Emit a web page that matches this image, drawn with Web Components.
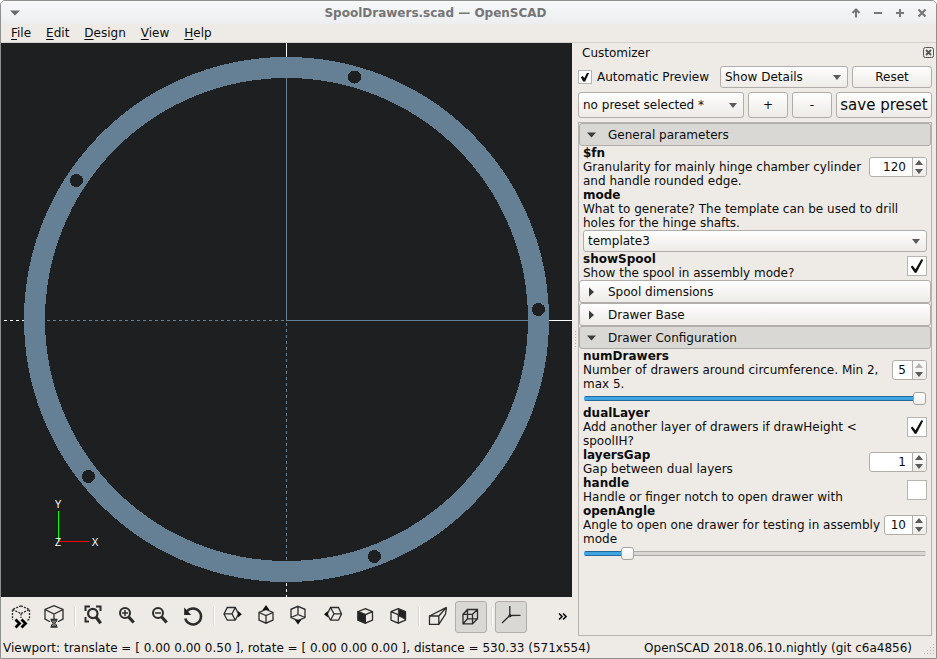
<!DOCTYPE html>
<html lang="en">
<head>
<meta charset="utf-8">
<title>SpoolDrawers.scad — OpenSCAD</title>
<style>
  body { margin: 0; background: #fff; color: #0c0c0c; font: 12px/14px "DejaVu Sans", sans-serif; }
</style>
</head>
<body>
<scad-window></scad-window>
<script>
const BASE = `
  *, *::before, *::after { box-sizing: border-box; }
  button, input, select { font: inherit; color: inherit; margin: 0; padding: 0; }
  button { background: none; border: 0; }
  svg { display: block; }
  .raised { border: 1px solid #b0adaa; border-radius: 3px; background: linear-gradient(#fefefe, #eeebe7); }
`;

function define(name, css, markup, setup) {
  customElements.define(name, class extends HTMLElement {
    connectedCallback() {
      if (this.shadowRoot) return;
      const root = this.attachShadow({ mode: 'open' });
      const t = document.createElement('template');
      t.innerHTML = `<style>${BASE}${css}</style>` + (typeof markup === 'function' ? markup(this) : markup);
      root.append(t.content.cloneNode(true));
      if (setup) setup(this, root);
    }
  });
}

/* ---------- title bar ---------- */
define('title-bar', `
  :host { display: flex; align-items: center; height: 23px; padding: 1px 3px 0;
    background: linear-gradient(#f7f8f8, #eceef0); color: #757575; }
  h1 { flex: 1; margin: 0; font-size: 12px; font-weight: bold; text-align: center; }
  button { width: 22px; height: 22px; display: grid; place-items: center; }
  nav { display: flex; }
`, `
  <button aria-label="Window menu"><svg width="10" height="6"><path d="M0 0.5h10l-5 5z" fill="#6a6a6a"/></svg></button>
  <h1><slot></slot></h1>
  <nav>
    <button aria-label="Shade"><svg width="10" height="10"><path d="M5 9.500V2M1.500 5L5 1.500L8.500 5" fill="none" stroke="#777" stroke-width="2"/></svg></button>
    <button aria-label="Minimize"><svg width="10" height="10"><path d="M1 5h8" stroke="#777" stroke-width="2"/></svg></button>
    <button aria-label="Maximize"><svg width="10" height="10"><path d="M1 5h8M5 1v8" stroke="#777" stroke-width="2"/></svg></button>
    <button aria-label="Close"><svg width="10" height="10"><path d="M1.500 1.500l7 7M8.500 1.500l-7 7" stroke="#777" stroke-width="2.200"/></svg></button>
  </nav>
`);

/* ---------- menu bar ---------- */
define('menu-bar', `
  :host { display: flex; gap: 1px; height: 19px; padding: 0 3px; border-bottom: 1px solid #d3d1cd; background: #eeebe7; }
  button { padding: 0 7px; }
  u { text-underline-offset: 2px; }
`, `
  <button><u>F</u>ile</button><button><u>E</u>dit</button><button><u>D</u>esign</button><button><u>V</u>iew</button><button><u>H</u>elp</button>
`);

/* ---------- 3D viewport ---------- */
define('model-view', `
  :host { display: block; flex: 1; min-height: 0; background: #1d1f20; overflow: hidden; }
  svg { width: 100%; height: 100%; }
  text { font: 10px "Liberation Sans", sans-serif; fill: #fff; text-anchor: middle; }
`, `
  <svg viewBox="0 0 571 554" preserveAspectRatio="xMidYMid slice" role="img" aria-label="Ring template with five holes">
    <g shape-rendering="crispEdges">
      <path d="M285.500 0v14M548 277.500h23" stroke="#fff"/>
      <path d="M3 277.500h21M285.500 540v14" stroke="#fff" stroke-dasharray="3 3"/>
      <circle cx="285.500" cy="276.500" r="252" fill="none" stroke="#657f94" stroke-width="21"/>
      <path d="M285.500 35v243M285 277.500h242" stroke="#657f94"/>
      <path d="M283 277.500H44M285.500 280v240" stroke="#657f94" stroke-dasharray="3 3"/>
      <g fill="#1d1f20">
        <circle cx="353.500" cy="34" r="6.500"/><circle cx="75.500" cy="137.500" r="6.500"/>
        <circle cx="87.500" cy="433.500" r="6.500"/><circle cx="373.500" cy="513.500" r="6.500"/>
        <circle cx="537.500" cy="266.500" r="6.500"/>
      </g>
      <path d="M57.500 468v30" stroke="#0f0"/>
      <path d="M58 498.500h30" stroke="#f00"/>
    </g>
    <text x="57" y="465">Y</text><text x="57" y="503">Z</text><text x="94" y="503">X</text>
  </svg>
`);

/* ---------- tool bar ---------- */
const ICONS = {
  preview: `<path d="M12 .8L3.500 4.500V15M12 .8l8.500 3.700V14l-3 2M3.500 4.500L12 8.500l8.500-4M12 8.500V13" stroke-dasharray="2 1.200"/><path d="M6.500 14.500l4 4-4 4M12.500 14.500l4 4-4 4" stroke="#000" stroke-width="2.800"/>`,
  render: `<path d="M8 16.700L3 14V4.500L12 .7l9 3.800V14l-5 2.700M3 4.500L12 9l9-4.500M12 9v5"/><path d="M8.500 14.500h7M8.500 22h7" stroke-width="1.600"/><path d="M9.500 15v1.500L11.300 18.200L9.500 20v1.500h5V20L12.700 18.200l1.800-1.700V15z" fill="#777" stroke-width="1"/>`,
  fit: `<path d="M3.500 6V1.500H8M14 1.500h4.500V6M3.500 12v4.500H7" stroke-width="2"/><circle cx="10.800" cy="8.500" r="4.700" stroke-width="2.200"/><path d="M14 12l4.700 6.300" stroke-width="3.200"/>`,
  zoomin: `<circle cx="10" cy="8" r="5" stroke-width="2"/><path d="M7 8h6M10 5v6" stroke-width="1.500"/><path d="M13.700 12l5 5.500" stroke-width="3.200"/>`,
  zoomout: `<circle cx="10" cy="8" r="5" stroke-width="2"/><path d="M7 8h6" stroke-width="1.500"/><path d="M13.700 12l5 5.500" stroke-width="3.200"/>`,
  reset: `<path d="M4.300 13.500A8 8 0 1 0 6 6.200" stroke-width="2.500"/><path d="M3.200 2.500v7.500h7z" fill="#222" stroke="none"/>`,
  right: `<path d="M3 9L6.300 2.500h8L17.500 9l-3.200 6.200h-8zM6.300 2.500l5 0M14.300 2.500L11 8.800l3.300 6.400M11 8.800H3.500"/><path d="M17 6l3.800 3.300L17 12.500z" fill="#111" stroke="none"/>`,
  top: `<path d="M12 4.500l7 3V15l-7 3.200L5 15V7.500zM5 7.500l7 3 7-3M12 10.500V18"/><path d="M8.500 5L12 0l3.500 5z" fill="#111" stroke="none"/>`,
  bottom: `<path d="M11 1.300l7 3V12.500l-7 3-7-3V4.300zM11 1.300V9.500M4 12.500l7-3 7 3"/><path d="M7.700 14.800L11 19.500l3.300-4.700z" fill="#111" stroke="none"/>`,
  left: `<path d="M7.300 9l3.200-6.500h8L21.500 9l-3 6.200h-8zM10.500 2.500L14 8.800l-3.500 6.400M14 8.800h7"/><path d="M7.800 6L4 9.300l3.800 3.200z" fill="#111" stroke="none"/>`,
  front: `<path d="M12.300 3.700l7.200 3V15l-7.200 3.200L5 15V6.700zM5 6.700l7.300 3 7.200-3M12.300 9.700V18"/><path d="M5 6.700l7.300 3V18L5 15z" fill="#222"/>`,
  back: `<path d="M12.300 3.700l7.200 3V15l-7.200 3.200L5 15V6.700zM5 6.700l7.300 3V18M5 6.700l7.300-3"/><path d="M12.300 4l7.200 2.700v8L16 12.500l-3.700-1.500z" fill="#222" stroke-width=".6"/>`,
  persp: `<path d="M3.500 11h9.300v8.300H3.500zM3.500 11L20.500 2.300L12.800 11M12.800 19.300L19.500 9l1-6.700"/>`,
  ortho: `<path d="M4 9.300h9.500v9.500H4zM8.500 4.500h10v9.300h-10zM4 9.300l4.500-4.800M13.500 9.300l5-4.800M13.500 18.800l5-5M4 18.800l4.500-5"/>`,
  axes: `<path d="M10.800 1v9.500l10.700-.2M10.800 10.500L3 18"/><circle cx="11" cy="10.700" r="1.500" fill="#222" stroke="none"/>`,
};

define('tool-button', `
  :host { display: block; flex: none; }
  button { width: 32px; height: 32px; display: grid; place-items: center; border-radius: 3px; }
  button[aria-pressed] { background: #dad8d5; border: 1px solid #b0adaa; }
`, el => `
  <button aria-label="${el.getAttribute('label')}" ${el.hasAttribute('pressed') ? 'aria-pressed="true"' : ''}>
    <svg width="24" height="24" fill="none" stroke="#2c2c2c" stroke-width="1.300">${ICONS[el.getAttribute('icon')]}</svg>
  </button>
`);

define('tool-bar', `
  :host { display: flex; align-items: center; gap: 1px; height: 39px; padding: 0 4px; overflow: hidden; }
  hr { flex: none; width: 6px; height: 19px; margin: 0; border: 0; background: linear-gradient(90deg, transparent 3px, #dbd8d4 3px, #dbd8d4 4px, #fff 4px, #fff 5px, transparent 5px); }
  .more { margin-left: auto; width: 12px; height: 24px; display: grid; place-items: center; }
`, `
  <tool-button icon="preview" label="Preview"></tool-button>
  <tool-button icon="render" label="Render"></tool-button>
  <hr>
  <tool-button icon="fit" label="View all"></tool-button>
  <tool-button icon="zoomin" label="Zoom in"></tool-button>
  <tool-button icon="zoomout" label="Zoom out"></tool-button>
  <tool-button icon="reset" label="Reset view"></tool-button>
  <hr>
  <tool-button icon="right" label="Right"></tool-button>
  <tool-button icon="top" label="Top"></tool-button>
  <tool-button icon="bottom" label="Bottom"></tool-button>
  <tool-button icon="left" label="Left"></tool-button>
  <tool-button icon="front" label="Front"></tool-button>
  <tool-button icon="back" label="Back"></tool-button>
  <hr>
  <tool-button icon="persp" label="Perspective"></tool-button>
  <tool-button icon="ortho" label="Orthogonal" pressed></tool-button>
  <hr>
  <tool-button icon="axes" label="Show axes" pressed></tool-button>
  <button class="more" aria-label="More tools"><svg width="9" height="7" fill="none" stroke="#111" stroke-width="1.600"><path d="M1 .5l3 3-3 3M5 .5l3 3-3 3"/></svg></button>
`);

/* ---------- form controls ---------- */
define('combo-box', `
  :host { display: grid; align-items: center; }
  select, i { grid-area: 1 / 1; }
  select { appearance: none; width: 100%; height: 100%; padding: 0 20px 0 4px; outline: 0; }
  i { justify-self: end; margin-right: 7px; border: 4px solid transparent; border-top: 5px solid #5a5a5a; border-bottom: 0; pointer-events: none; }
`, el => `
  <select class="raised" aria-label="${el.getAttribute('label')}"><option>${el.getAttribute('value')}</option></select><i></i>
`);

const CHECK_CSS = `
  input[type=checkbox] { appearance: none; flex: none; display: grid; place-items: center; width: 20px; height: 20px; background: #fff; border: 1px solid #b7b4b1; }
  input[type=checkbox]:checked::before { content: ""; width: 70%; height: 75%; background: #111;
    clip-path: polygon(0 56%, 14% 46%, 38% 74%, 84% 0, 100% 4%, 46% 100%, 32% 100%); }
`;

define('param-row', `
  :host { display: block; padding: 0 4px; }
  .row { display: flex; align-items: center; gap: 3px; }
  label { flex: 1; min-width: 0; }
  b, span { display: block; }
  ${CHECK_CSS}
  .spin { flex: none; display: grid; grid-template-columns: 1fr 14px; height: 20px; border: 1px solid #b0adaa; border-radius: 3px; background: #fff; overflow: hidden; }
  .spin input { min-width: 0; width: 100%; padding-right: 6px; border: 0; background: none; text-align: right; outline: 0; }
  .steps { display: grid; grid-template-rows: 1fr 1fr; border-left: 1px solid #b0adaa; background: linear-gradient(#fefefe, #eeebe7); }
  .steps button { display: grid; place-items: center start; padding-left: 2px; }
  .steps i { border: 4px solid transparent; }
  .up i { border-bottom: 5px solid #5a5a5a; border-top: 0; }
  .down i { border-top: 5px solid #5a5a5a; border-bottom: 0; }
  .up:disabled i { border-bottom-color: #b5b2af; }
  combo-box { height: 22px; }
  input[type=range] { appearance: none; display: block; width: calc(100% - 2px); height: 15px; margin: 0 1px; background: none; outline: 0; }
  input[type=range]::-webkit-slider-runnable-track { height: 5px; border-radius: 2px;
    background: linear-gradient(90deg, #3fa5e0 var(--fill), #d9d6d3 var(--fill)) 0 1px / 100% 3px no-repeat,
      linear-gradient(90deg, #23699a var(--fill), #aeaba8 var(--fill)); }
  input[type=range]::-webkit-slider-thumb { appearance: none; width: 13px; height: 13px; margin-top: -4px; border: 1px solid #a5a29f; border-radius: 3px; background: linear-gradient(#fefefe, #f1efec); }
`, el => {
  const a = n => el.getAttribute(n);
  const kind = a('kind');
  let side = '', below = '';
  if (kind === 'check') side = `<input type="checkbox" id="f" ${el.hasAttribute('checked') ? 'checked' : ''}>`;
  if (kind === 'spin' || kind === 'slider') side = `
    <div class="spin" style="width:${a('w')}px"><input id="f" type="text" inputmode="numeric" value="${a('value')}">
      <div class="steps"><button class="up" aria-label="Increase" ${a('value') === a('max') ? 'disabled' : ''}><i></i></button><button class="down" aria-label="Decrease"><i></i></button></div></div>`;
  if (kind === 'slider') {
    const pct = Math.round(100 * (a('value') - a('min')) / (a('max') - a('min')));
    below = `<input type="range" aria-label="${a('name')}" min="${a('min')}" max="${a('max')}" value="${a('value')}" style="--fill:${pct}%">`;
  }
  if (kind === 'combo') below = `<combo-box label="${a('name')}" value="${a('value')}"></combo-box>`;
  return `<div class="row"><label for="f"><b>${a('name')}</b><span><slot></slot></span></label>${side}</div>${below}`;
});

define('param-group', `
  :host { display: block; }
  button { display: flex; align-items: center; width: 100%; height: 23px; padding: 0 7px; text-align: left; }
  button[aria-expanded=true] { background: #d9d8d5; }
  svg { flex: none; margin-right: 11px; }
`, el => {
  const open = el.hasAttribute('open');
  return `<button class="raised" aria-expanded="${open}"><svg width="10" height="10" fill="#3c3c3c"><path d="${open ? 'M0 2.500h9l-4.500 5z' : 'M2 .5v9l5-4.500z'}"/></svg>${el.getAttribute('name')}</button>${open ? '<slot></slot>' : ''}`;
});

/* ---------- customizer dock ---------- */
define('customizer-dock', `
  :host { display: flex; flex-direction: column; gap: 4px; min-width: 0; padding-right: 4px; }
  header { display: flex; align-items: center; height: 19px; margin-right: -2px; padding-left: 4px; }
  h2 { flex: 1; margin: 0; font-size: 12px; font-weight: normal; }
  .line { display: flex; gap: 4px; }
  .line label { flex: 1; display: flex; align-items: center; gap: 5px; white-space: nowrap; }
  ${CHECK_CSS}
  .line input[type=checkbox] { width: 14px; height: 14px; }
  .line input[type=checkbox]:checked::before { clip-path: polygon(0 52%, 24% 40%, 42% 62%, 76% 0, 100% 4%, 52% 100%, 28% 100%); }
  .one { height: 22px; }
  .two { height: 26px; }
  .grow { flex: 1; }
  .details { width: 128px; }
  .reset { width: 80px; }
  .small { width: 40px; }
  .save { width: 96px; font-size: 15px; white-space: nowrap; }
  .frame { flex: 1; min-height: 0; overflow: hidden; border: 1px solid #b5b2af; }
`, `
  <header><h2>Customizer</h2><button aria-label="Close Customizer"><svg width="11" height="11" fill="none" stroke="#555"><rect x=".5" y=".5" width="10" height="10" rx="2"/><path d="M3 3l5 5M8 3L3 8" stroke-width="1.800"/></svg></button></header>
  <div class="line one">
    <label><input type="checkbox" checked>Automatic Preview</label>
    <combo-box class="details" label="Details" value="Show Details"></combo-box>
    <button class="raised reset">Reset</button>
  </div>
  <div class="line two">
    <combo-box class="grow" label="Preset" value="no preset selected *"></combo-box>
    <button class="raised small">+</button>
    <button class="raised small">-</button>
    <button class="raised save">save preset</button>
  </div>
  <div class="frame">
    <param-group name="General parameters" open>
      <param-row name="$fn" kind="spin" w="58" value="120">Granularity for mainly hinge chamber cylinder and handle rounded edge.</param-row>
      <param-row name="mode" kind="combo" value="template3">What to generate? The template can be used to drill holes for the hinge shafts.</param-row>
      <param-row name="showSpool" kind="check" checked>Show the spool in assembly mode?</param-row>
    </param-group>
    <param-group name="Spool dimensions"></param-group>
    <param-group name="Drawer Base"></param-group>
    <param-group name="Drawer Configuration" open>
      <param-row name="numDrawers" kind="slider" w="35" min="2" max="5" value="5">Number of drawers around circumference. Min 2, max 5.</param-row>
      <param-row name="dualLayer" kind="check" checked>Add another layer of drawers if drawHeight &lt; spoolIH?</param-row>
      <param-row name="layersGap" kind="spin" w="58" value="1">Gap between dual layers</param-row>
      <param-row name="handle" kind="check">Handle or finger notch to open drawer with</param-row>
      <param-row name="openAngle" kind="slider" w="43" min="0" max="90" value="10">Angle to open one drawer for testing in assembly mode</param-row>
    </param-group>
  </div>
`);

/* ---------- status bar ---------- */
define('status-bar', `
  :host { display: flex; align-items: center; justify-content: space-between; height: 22px; padding: 2px 1px 0 2px; white-space: nowrap; }
  .end { display: flex; gap: 11px; align-items: end; }
`, `
  <span><slot></slot></span>
  <span class="end"><slot name="version"></slot><svg width="12" height="12" fill="#b5b2af"><path d="M10 1h1v1h-1zM7 4h1v1H7zM10 4h1v1h-1zM4 7h1v1H4zM7 7h1v1H7zM10 7h1v1h-1zM1 10h1v1H1zM4 10h1v1H4zM7 10h1v1H7zM10 10h1v1h-1z"/></svg></span>
`);

/* ---------- window ---------- */
define('scad-window', `
  :host { display: flex; flex-direction: column; height: 100vh; box-sizing: border-box; overflow: hidden;
    border: 1px solid #8f8f8f; border-radius: 5px 5px 0 0; background: #eeebe7; }
  main { flex: 1; min-height: 0; display: grid; grid-template-columns: minmax(0, 1fr) 6px 358px; }
  .left { display: flex; flex-direction: column; min-width: 0; min-height: 0; }
  .split { align-self: center; justify-self: center; width: 1px; height: 18px; background: repeating-linear-gradient(#b5b2af 0 1px, transparent 1px 3px); }
`, `
  <title-bar>SpoolDrawers.scad — OpenSCAD</title-bar>
  <menu-bar></menu-bar>
  <main>
    <div class="left"><model-view></model-view><tool-bar></tool-bar></div>
    <div class="split"></div>
    <customizer-dock></customizer-dock>
  </main>
  <status-bar>Viewport: translate = [ 0.00 0.00 0.50 ], rotate = [ 0.00 0.00 0.00 ], distance = 530.33 (571x554)<span slot="version">OpenSCAD 2018.06.10.nightly (git c6a4856)</span></status-bar>
`);
</script>
</body>
</html>
